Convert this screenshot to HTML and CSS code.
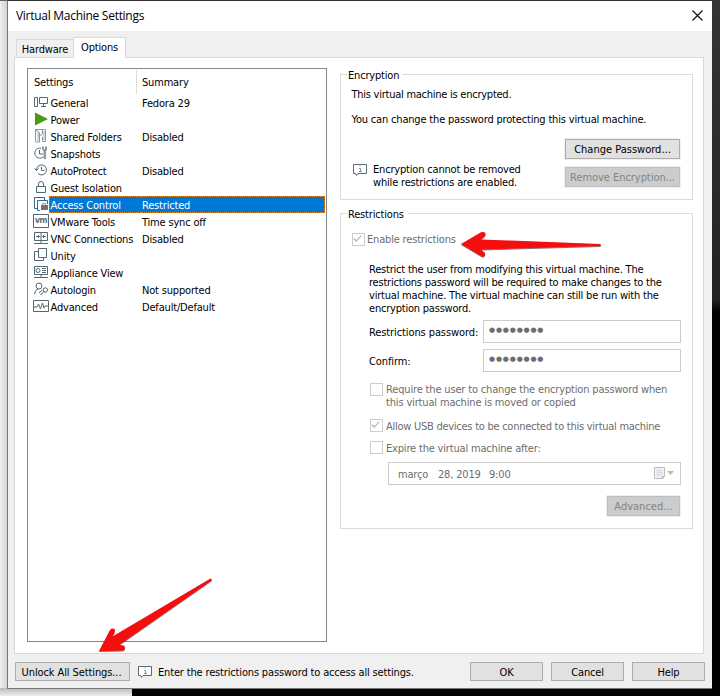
FILE: index.html
```html
<!DOCTYPE html>
<html lang="en">
<head>
<meta charset="utf-8">
<title>Virtual Machine Settings</title>
<link rel="stylesheet" href="styles.css">
</head>
<body>
<svg class="defs" aria-hidden="true">
  <symbol id="info" viewBox="0 0 14 12"><path d="M.5 .5h13v9H5L3.5 11.5 2.5 9.5h-2z" fill="#fff" stroke="#566b75"/><path d="M6.500 2h1M6 4.500h1.500v3M6 7.500h3" fill="none" stroke="#8a9298"/></symbol>
  <symbol id="check" viewBox="0 0 13 13"><path d="M2 6.500l3 3 6-6.500" fill="none" stroke="#b4b4b4" stroke-width="1.4"/></symbol>
</svg>
<main class="window">
  <header class="titlebar"><h1>Virtual Machine Settings</h1>
    <svg class="close" viewBox="0 0 11 11"><path d="M.5 .5l10 10M10.500 .5l-10 10" stroke="#111" stroke-width="1.15"/></svg>
  </header>
  <nav class="tabs"><span class="tab"><span>Hardware</span></span><span class="tab active"><span>Options</span></span></nav>
  <section class="panel">
    <div class="list">
      <div class="list-head"><span>Settings</span><span>Summary</span></div>
      <div class="row"><svg viewBox="0 0 16 16" class="ico"><path d="M1.500 3.500h3v9h-3zM6.500 3.500h8v6h-8zM8 12.500h5M10.500 10v2" /></svg><b>General</b><i>Fedora 29</i></div>
      <div class="row"><svg viewBox="0 0 16 16" class="ico"><path d="M2 1.500L15 8 2 14.500z" class="play"/></svg><b>Power</b><i></i></div>
      <div class="row"><svg viewBox="0 0 16 16" class="ico"><path d="M4 4l2 1v8H4zM10 3h2v9h-2z" class="pale"/><path d="M2.500 13.500v-12h10v12h-3M2.500 2l4 2.500v9.500h-4M6.500 8l3-2v-4M9.500 9v4.500" class="soft"/></svg><b>Shared Folders</b><i>Disabled</i></div>
      <div class="row"><svg viewBox="0 0 16 16" class="ico"><path d="M8 3.300A5 5 0 1 0 10 12M6.500 5v4H10"/><path d="M9 1l2 1v2h1V2l2-1v4l-1 1v8h-2.500V6L9 4z" class="metal"/></svg><b>Snapshots</b><i></i></div>
      <div class="row"><svg viewBox="0 0 16 16" class="ico"><path d="M3.500 8A5 5 0 1 1 5 11.500M1.500 6.500l2 2 2-2M8.500 5v3.500h3"/></svg><b>AutoProtect</b><i>Disabled</i></div>
      <div class="row"><svg viewBox="0 0 16 16" class="ico"><path d="M3.500 7.500h9v6h-9zM5.500 7V5q0-2.500 2.500-2.500T10.500 5v2"/></svg><b>Guest Isolation</b><i></i></div>
      <div class="row selected"><svg viewBox="0 0 16 16" class="ico"><path d="M4 12.500H1.500v-11h10V4M7 14.500H4.500v-10h10V8"/><path d="M8 9h7v5H8z" class="lock"/><path d="M9.500 9V7.500h3V9" class="lockline"/></svg><b>Access Control</b><i>Restricted</i></div>
      <div class="row"><svg viewBox="0 0 16 16" class="ico"><path d="M.5 1.500h15v13H.5z"/><text x="7.700" y="9.500" text-anchor="middle">vm</text></svg><b>VMware Tools</b><i>Time sync off</i></div>
      <div class="row"><svg viewBox="0 0 16 16" class="ico"><path d="M1.500 2.500h13v8h-13zM8 2v11M1 13.500h14M3 6.500h3.500M13 6.500H9.500M5 5l1.500 1.500L5 8M11 5L9.500 6.500 11 8"/></svg><b>VNC Connections</b><i>Disabled</i></div>
      <div class="row"><svg viewBox="0 0 16 16" class="ico"><path d="M5.500 1.500h8v9h-8zM5 4.500H1.500v9h9V11"/></svg><b>Unity</b><i></i></div>
      <div class="row"><svg viewBox="0 0 16 16" class="ico"><path d="M1.500 2.500h13v8h-13zM1 13.500h14M8 11v2M9 4.500h4M9 6.500h4M9 8.500h4"/><circle cx="5" cy="6.500" r="2"/></svg><b>Appliance View</b><i></i></div>
      <div class="row"><svg viewBox="0 0 16 16" class="ico"><circle cx="6" cy="5" r="3"/><path d="M1.500 13q.5-4 3.500-5M7.500 14l3.500-3.500M6 12l3-3"/><circle cx="12.300" cy="9" r="2.200"/></svg><b>Autologin</b><i>Not supported</i></div>
      <div class="row"><svg viewBox="0 0 16 16" class="ico"><path d="M.5 2.500h15v11H.5zM1 9h3l1.500-3 2 5 2-6 1.500 5L12 8h3"/></svg><b>Advanced</b><i>Default/Default</i></div>
    </div>
    <div class="details">
      <section class="group encryption">
        <h2 class="w-enc">Encryption</h2>
        <p class="p1">This virtual machine is encrypted.</p>
        <p class="p2">You can change the password protecting this virtual machine.</p>
        <div class="enc-row">
          <svg class="info"><use href="#info"/></svg>
          <p>Encryption cannot be removed<br>while restrictions are enabled.</p>
          <div class="enc-buttons"><button>Change Password...</button><button disabled>Remove Encryption...</button></div>
        </div>
      </section>
      <section class="group restrictions">
        <h2 class="w-res">Restrictions</h2>
        <div class="option enable"><svg class="box"><use href="#check"/></svg><span>Enable restrictions</span></div>
        <div class="inner">
          <p class="explain">Restrict the user from modifying this virtual machine. The<br>restrictions password will be required to make changes to the<br>virtual machine. The virtual machine can still be run with the<br>encryption password.</p>
          <div class="field"><label>Restrictions password:</label><div class="input">●●●●●●●●</div></div>
          <div class="field confirm"><label>Confirm:</label><div class="input">●●●●●●●●</div></div>
          <div class="option require"><svg class="box"></svg><span>Require the user to change the encryption password when<br>this virtual machine is moved or copied</span></div>
          <div class="option allow"><svg class="box"><use href="#check"/></svg><span>Allow USB devices to be connected to this virtual machine</span></div>
          <div class="option expire"><svg class="box"></svg><span>Expire the virtual machine after:</span></div>
          <div class="date"><span class="month">março</span><span class="day">28, 2019</span><span>9:00</span>
            <svg class="calendar" viewBox="0 0 22 13"><path d="M1.500 .5h10v9l-2 2h-8z" fill="#f2f4f7" stroke="#bdb9b9"/><path d="M3 3.500h7M3 5.500h7M3 7.500h7M4.500 2v8M6.500 2v8M8.500 2v8" stroke="#ccd5e0" stroke-width=".6"/><path d="M9.500 11.500v-2h2" fill="none" stroke="#b5b1b1"/><path d="M14 4h7l-3.500 4z" fill="#b9b8b2"/></svg>
          </div>
          <button class="advanced" disabled>Advanced...</button>
        </div>
      </section>
    </div>
  </section>
  <footer>
    <button class="unlock">Unlock All Settings...</button>
    <svg class="info"><use href="#info"/></svg>
    <p>Enter the restrictions password to access all settings.</p>
    <button>OK</button><button>Cancel</button><button>Help</button>
  </footer>
</main>
<svg class="arrows" viewBox="0 0 720 696">
  <defs><filter id="shadow" x="-10%" y="-30%" width="120%" height="170%"><feDropShadow dx="0" dy="1" stdDeviation="0.700" flood-opacity=".55"/></filter></defs>
  <g fill="#f60808" filter="url(#shadow)">
    <path d="M461 244L481 232.300Q485 231 485.700 234 485.500 236 481 239.500L600 244Q602 245 600 246L481 249.500 485 253Q486 257 482 256.500Z"/>
    <path d="M99 651L110 630Q112 627.500 115 629.500 115 632 112.500 636.500L210.500 578.500Q212.500 579 211.500 580.500L119 645 124 645.500Q126.500 649 123 650.500Z"/>
  </g>
</svg>
</body>
</html>
```
FILE: styles.css
```css
* { box-sizing: border-box; }
body { margin: 0; width: 720px; height: 696px; overflow: hidden; position: relative;
  font: 11px/13px "DejaVu Sans Condensed", "DejaVu Sans", sans-serif; font-stretch: condensed; letter-spacing: -.18px; color: #000; white-space: nowrap;
  background:
    linear-gradient(#666, #666) 0 0 / 132px 1px no-repeat,
    linear-gradient(#333, #333) 132px 0 / 588px 1px no-repeat,
    linear-gradient(90deg, #f0f0f0, #d2d2d2) 0 0 / 7px 688px no-repeat,
    linear-gradient(#b9b9b9, #eee) 0 688px / 132px 8px no-repeat,
    linear-gradient(#353535, #222 300px, #000 312px) 712px 0 / 8px 696px no-repeat, #000; }
.defs { position: absolute; width: 0; height: 0; }
h1, h2, p { margin: 0; font-size: inherit; font-weight: normal; }
svg { display: block; flex: none; }
.window { margin: 0 8px 0 7px; border: solid #777; border-width: 1px 0 1px 1px; border-top-color: #333; height: 689px; background: #f0f0f0; display: flex; flex-direction: column; }
.titlebar { height: 30px; background: #fff; display: flex; justify-content: space-between; align-items: center; padding: 0 9px 0 8px; }
h1 { font: 12px/16px "Open Sans", sans-serif; letter-spacing: -.28px; }
.close { width: 11px; height: 11px; margin-top: -2px; }
.tabs { height: 26px; display: flex; align-items: flex-end; padding-left: 8px; }
.tab { height: 18px; width: 57px; border: 1px solid #d9d9d9; border-width: 1px 0 0 1px; text-align: center; padding-top: 3px; }
.tab.active { height: 21px; width: 53px; background: #fff; border-right-width: 1px; margin-bottom: -1px; z-index: 1; }
.panel { height: 597px; margin: 0 8px 0 6px; border: 1px solid #d9d9d9; background: #fff; display: flex; padding: 10px 0 0 12px; }
.list { width: 300px; height: 574px; border: 1px solid #828790; flex: none; }
.list-head { display: grid; grid-template-columns: 108px 1fr; height: 25px; }
.list-head span { padding: 7px 0 0 6px; }
.list-head span + span { border-left: 1px solid #ddd; margin-top: 1px; padding: 6px 0 0 5px; }
.row { display: grid; grid-template-columns: 16px 92px 1fr; height: 17px; line-height: 19px; padding: 0 1px 0 5px; }
.row b, .row i { font-weight: normal; font-style: normal; padding-left: 1.500px; }
.row i { padding-left: 1px; }
.row.selected b, .row.selected i { background: #0078d7; color: #fff; border: dotted #ef8b26; border-width: 1px 0; line-height: 17px; height: 17px; }
.row.selected b { border-left-width: 1px; padding-left: .5px; }
.row.selected i { border-right-width: 1px; }
.ico { width: 16px; height: 16px; }
.ico path, .ico circle { fill: none; stroke: #526873; }
.ico .soft { stroke: #8996a0; }
.ico .play { fill: #4a9a12; stroke: none; }
.ico .pale { fill: #cfd5d8; stroke: none; }
.ico .metal { fill: #8d999f; stroke: none; }
.ico .lock { fill: #846b70; stroke: none; }
.ico .lockline { stroke: #a79a9f; }
.selected .ico path:first-child { stroke: #35698f; }
.ico text { font: bold 8px "DejaVu Sans", sans-serif; letter-spacing: -.8px; fill: #60747e; }
.details { margin: 6px 0 0 13px; width: 353px; flex: none; display: flex; flex-direction: column; gap: 13px; }
.group { border: 1px solid #dcdcdc; }
.encryption { height: 126px; }
.restrictions { height: 316px; }
h2 { background: #fff; margin: -6px 0 0 6px; padding-left: 1px; }
.w-enc { width: 55px; } .w-res { width: 61px; }
.p1 { margin: 6px 0 0 10.500px; letter-spacing: -.25px; }
.p2 { margin: 12px 0 0 10.500px; letter-spacing: -.18px; }
.enc-row { display: flex; align-items: flex-start; margin: 13px 12px 0; }
.info { width: 14px; height: 12px; }
.enc-row .info { margin-top: 25px; }
.enc-row p { margin: 24px 0 0 6px; }
.enc-buttons { margin-left: auto; width: 115px; display: grid; gap: 8px; }
button { font: inherit; letter-spacing: inherit; color: #000; height: 20px; padding: 0; border: 1px solid #adadad; background: #e1e1e1; white-space: nowrap; }
button:disabled { background: #ccc; border-color: #bfbfbf; color: #838383; }
.enc-buttons button, .advanced { box-shadow: 0 0 0 1px #f0f0f0; }
.enc-buttons button { letter-spacing: 0; }
.enc-buttons button + button { letter-spacing: -.05px; }
.option { display: flex; gap: 3px; color: #6d6d6d; }
.box { width: 13px; height: 13px; border: 1px solid #ccc; overflow: visible; }
.box use { transform: translate(-1px, -1px); width: 13px; height: 13px; }
.enable { margin: 12px 0 0 11px; gap: 2px; }
.inner { padding: 17px 11px 0 28px; display: flex; flex-direction: column; }
.explain { letter-spacing: -.21px; }
.field { display: flex; justify-content: space-between; align-items: center; margin-top: 5px; }
.field label { padding-top: 1px; letter-spacing: -.1px; }
.field.confirm { margin-top: 6px; }
.input { width: 198px; height: 23px; border: 1px solid #ccc; color: #6d6d6d; padding: 3px 5px; font: 7px/13px "DejaVu Sans", sans-serif; letter-spacing: .8px; }
.require { margin: 11px 0 0 1px; letter-spacing: -.16px; }
.allow { margin: 10px 0 0 1px; letter-spacing: -.26px; }
.expire { margin: 9px 0 0 1px; }
.allow span, .expire span { padding-top: 1px; height: 13px; }
.date { height: 23px; margin: 8px 0 0 19px; border: 1px solid #ccc; display: flex; align-items: center; padding: 1px 5px 0 9px; color: #6d6d6d; }
.month { width: 40px; } .day { width: 51px; }
.calendar { width: 22px; height: 13px; margin: -2px 0 0 auto; }
.advanced { width: 73px; align-self: flex-end; margin: 11px 1px 0 0; letter-spacing: 0; }
footer { display: flex; align-items: center; padding: 1px 7px 0; height: 34px; }
footer button { width: 73px; height: 19px; padding-top: 1px; }
footer button + button { margin-left: 8px; }
footer .unlock { width: 115px; margin-right: 8px; letter-spacing: -.1px; padding-right: 2px; }
footer p { margin: 0 auto 0 6px; padding-top: 1px; letter-spacing: -.16px; }
.arrows { position: absolute; inset: 0; width: 720px; height: 696px; pointer-events: none; z-index: 2; }
```
